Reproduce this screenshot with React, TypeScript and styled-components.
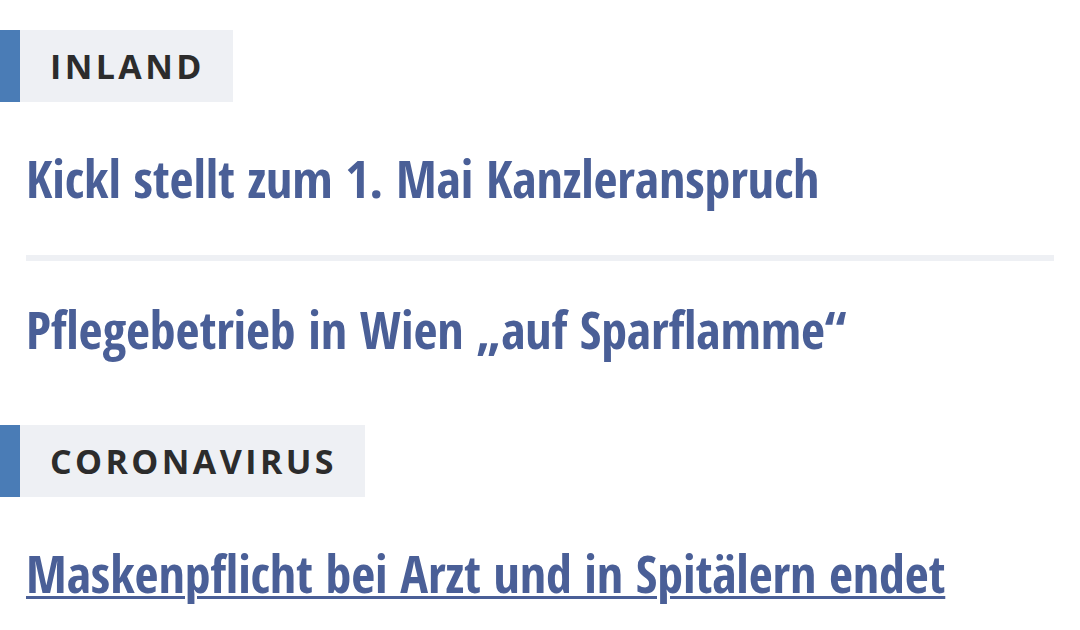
import React from "react";
import styled, { createGlobalStyle } from "styled-components";

const GlobalStyle = createGlobalStyle`
  html, body { margin: 0; padding: 0; background: #ffffff; }
  body { font-family: "Open Sans", "Liberation Sans", sans-serif; }
`;

const Page = styled.main`
  display: flex;
  flex-direction: column;
  padding: 30px 26px 0 0;
`;

const Section = styled.section`
  display: flex;
  flex-direction: column;
  & + & {
    margin-top: 65px;
  }
`;

const Label = styled.div`
  display: flex;
  align-items: stretch;
  height: 72px;
`;

const LabelBar = styled.span`
  width: 20px;
  background: #4a7cb6;
`;

const LabelText = styled.h2`
  margin: 0;
  display: flex;
  align-items: center;
  padding: 0 28px 0 30px;
  background: #eef0f4;
  color: #2c2c2c;
  font-family: "Open Sans", "Liberation Sans", sans-serif;
  font-weight: 700;
  font-size: 34px;
  letter-spacing: 3.4px;
  text-transform: uppercase;
`;

const List = styled.ul`
  list-style: none;
  margin: 0;
  padding: 0 0 0 26px;
  display: flex;
  flex-direction: column;
`;

const Item = styled.li<{ $divided?: boolean }>`
  padding-top: ${(p) => (p.$divided ? "37px" : "45px")};
  & + & {
    border-top: 6px solid #eef0f4;
  }
  &:not(:last-child) {
    padding-bottom: 46px;
  }
`;

const Headline = styled.a<{ $underline?: boolean }>`
  display: block;
  font-family: "Open Sans Condensed", "Roboto Condensed", "Liberation Sans Narrow", sans-serif;
  font-weight: 700;
  font-size: 52px;
  line-height: 62px;
  letter-spacing: -0.1px;
  color: #4a5f97;
  white-space: nowrap;
  text-decoration: ${(p) => (p.$underline ? "underline" : "none")};
  text-decoration-thickness: 3px;
  text-underline-offset: 3px;
`;

type Story = { title: string; underline?: boolean };
type Block = { label: string; stories: Story[] };

const blocks: Block[] = [
  {
    label: "Inland",
    stories: [
      { title: "Kickl stellt zum 1. Mai Kanzleranspruch" },
      { title: "Pflegebetrieb in Wien „auf Sparflamme“" },
    ],
  },
  {
    label: "Coronavirus",
    stories: [{ title: "Maskenpflicht bei Arzt und in Spitälern endet", underline: true }],
  },
];

export default function App() {
  return (
    <>
      <GlobalStyle />
      <Page>
        {blocks.map((b) => (
          <Section key={b.label}>
            <Label>
              <LabelBar />
              <LabelText>{b.label}</LabelText>
            </Label>
            <List>
              {b.stories.map((s, i) => (
                <Item key={s.title} $divided={i > 0}>
                  <Headline href="#" $underline={s.underline}>
                    {s.title}
                  </Headline>
                </Item>
              ))}
            </List>
          </Section>
        ))}
      </Page>
    </>
  );
}
